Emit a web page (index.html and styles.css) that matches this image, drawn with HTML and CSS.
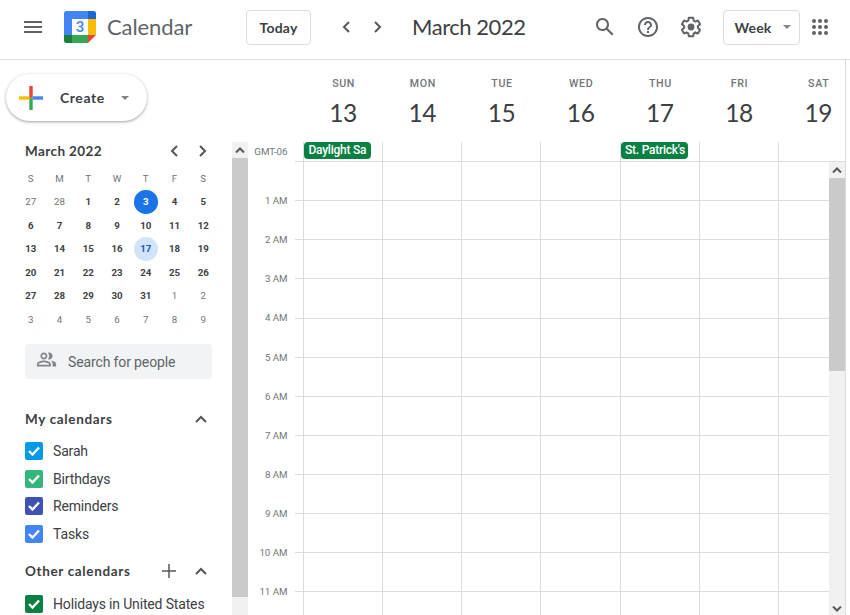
FILE: index.html
```
<!DOCTYPE html>
<html lang="en">

<head>
    <meta charset="UTF-8">
    <meta name="viewport" content="width=device-width, initial-scale=1.0">
    <title>Calendar</title>
    <link rel="stylesheet" href="styles.css">
</head>

<body>

    <!-- Top bar -->
    <header class="topbar">
        <svg class="menu-icon" width="18" height="12" viewBox="0 0 18 12"><path d="M0 0h18v2H0zM0 5h18v2H0zM0 10h18v2H0z"/></svg>
        <svg class="logo" width="32" height="32" viewBox="0 0 32 32">
            <path d="M2.500 0H24v8H8v16H0V2.500Q0 0 2.500 0z" fill="#4285f4"/>
            <path d="M24 0h5.500Q32 0 32 2.500V8h-8z" fill="#1967d2"/>
            <path d="M24 8h8v16h-8z" fill="#fbbc04"/>
            <path d="M8 24h16v8H8z" fill="#34a853"/>
            <path d="M0 24h8v8H2.500Q0 32 0 29.500z" fill="#188038"/>
            <path d="M24 24h8l-8 8z" fill="#ea4335"/>
            <path d="M8 8h16v16H8z" fill="#fff"/>
            <text x="16" y="20.800" text-anchor="middle" class="logo-day">3</text>
        </svg>
        <span class="brand">Calendar</span>
        <button class="btn today-btn">Today</button>
        <svg class="prev" width="8" height="12" viewBox="0 0 8 12"><path d="M7 1L2 6l5 5"/></svg>
        <svg class="next" width="8" height="12" viewBox="0 0 8 12"><path d="M1 1l5 5-5 5"/></svg>
        <h1 class="period">March 2022</h1>
        <div class="tools">
            <svg width="24" height="24" viewBox="0 0 24 24"><path d="M20.490 19l-5.730-5.730C15.530 12.200 16 10.910 16 9.500 16 5.910 13.090 3 9.500 3S3 5.910 3 9.500 5.910 16 9.500 16c1.410 0 2.700-.470 3.770-1.240L19 20.490 20.490 19zM5 9.500C5 7.010 7.010 5 9.500 5S14 7.010 14 9.500 11.990 14 9.500 14 5 11.990 5 9.500z"/></svg>
            <svg width="24" height="24" viewBox="0 0 24 24"><path d="M11 18h2v-2h-2v2zm1-16C6.480 2 2 6.480 2 12s4.480 10 10 10 10-4.480 10-10S17.520 2 12 2zm0 18c-4.410 0-8-3.590-8-8s3.590-8 8-8 8 3.590 8 8-3.590 8-8 8zm0-14c-2.210 0-4 1.790-4 4h2c0-1.100.9-2 2-2s2 .9 2 2c0 2-3 1.750-3 5h2c0-2.250 3-2.500 3-5 0-2.210-1.790-4-4-4z"/></svg>
            <svg width="24" height="24" viewBox="0 0 24 24"><path d="M13.850 22.250h-3.700c-.74 0-1.360-.54-1.450-1.270l-.27-1.890c-.27-.14-.53-.29-.79-.46l-1.800.72c-.7.26-1.470-.03-1.810-.65L2.200 15.530c-.35-.66-.2-1.440.36-1.880l1.530-1.190c-.01-.15-.02-.3-.02-.46 0-.15.01-.31.02-.46l-1.520-1.190c-.59-.45-.74-1.260-.37-1.880l1.850-3.190c.34-.62 1.110-.9 1.790-.63l1.810.73c.26-.17.52-.32.78-.46l.27-1.910c.09-.7.71-1.250 1.440-1.250h3.700c.74 0 1.360.54 1.450 1.270l.27 1.890c.27.14.53.29.79.46l1.800-.72c.71-.26 1.480.03 1.820.65l1.840 3.180c.36.66.2 1.440-.36 1.880l-1.520 1.190c.01.15.02.3.02.46s-.01.31-.02.46l1.520 1.190c.56.45.72 1.230.37 1.860l-1.860 3.220c-.34.62-1.110.9-1.800.63l-1.800-.72c-.26.17-.52.32-.78.46l-.27 1.910c-.1.68-.72 1.220-1.460 1.220zm-3.230-2h2.760l.37-2.550.53-.22c.44-.18.88-.44 1.340-.78l.45-.34 2.380.96 1.380-2.400-2.030-1.580.07-.56c.03-.26.06-.51.06-.78s-.03-.53-.06-.78l-.07-.56 2.030-1.580-1.390-2.400-2.390.96-.45-.35c-.42-.32-.87-.58-1.330-.77l-.52-.22-.37-2.550h-2.760l-.37 2.550-.53.21c-.44.19-.88.44-1.340.79l-.45.33-2.380-.95-1.390 2.390 2.030 1.580-.07.56a7 7 0 0 0-.06.79c0 .26.02.53.06.78l.07.56-2.030 1.580 1.380 2.400 2.390-.96.45.35c.43.33.86.58 1.330.77l.53.22.38 2.550z"/><circle cx="12" cy="12" r="3.400"/></svg>
        </div>
        <button class="btn view-btn">Week <span class="caret"></span></button>
        <svg class="apps" width="16" height="16" viewBox="0 0 16 16"><circle cx="2" cy="2" r="2"/><circle cx="8" cy="2" r="2"/><circle cx="14" cy="2" r="2"/><circle cx="2" cy="8" r="2"/><circle cx="8" cy="8" r="2"/><circle cx="14" cy="8" r="2"/><circle cx="2" cy="14" r="2"/><circle cx="8" cy="14" r="2"/><circle cx="14" cy="14" r="2"/></svg>
    </header>

    <div class="layout">
        <!-- Sidebar -->
        <aside class="sidebar">
            <button class="create">
                <svg width="24" height="24" viewBox="0 0 24 24"><path d="M10.300 0h3.400v10.300l-3.400 3.400z" fill="#ea4335"/><path d="M0 10.300h10.300v3.400H0z" fill="#fbbc04"/><path d="M10.300 13.700l3.400-3.400V24h-3.400z" fill="#34a853"/><path d="M13.700 10.300H24v3.400H13.700z" fill="#4285f4"/></svg>
                <span>Create</span>
                <span class="caret"></span>
            </button>

            <div class="side-body">
                <div class="side-content">
                    <div class="mini-head">
                        <span>March 2022</span>
                        <svg width="8" height="12" viewBox="0 0 8 12"><path d="M7 1L2 6l5 5"/></svg>
                        <svg width="8" height="12" viewBox="0 0 8 12"><path d="M1 1l5 5-5 5"/></svg>
                    </div>
                    <div class="mini-cal" id="miniCal"></div>

                    <div class="people">
                        <svg width="21" height="21" viewBox="0 0 24 24"><path d="M16.670 13.130C18.040 14.060 19 15.320 19 17v3h4v-3c0-2.180-3.570-3.470-6.330-3.870zM15 12c2.210 0 4-1.790 4-4s-1.790-4-4-4c-.47 0-.91.1-1.330.24C14.500 5.270 15 6.580 15 8s-.5 2.730-1.330 3.760c.42.14.86.24 1.330.24zM9 12c2.210 0 4-1.790 4-4s-1.790-4-4-4-4 1.790-4 4 1.790 4 4 4zm0-6c1.100 0 2 .9 2 2s-.9 2-2 2-2-.9-2-2 .9-2 2-2zM9 13c-2.670 0-8 1.340-8 4v3h16v-3c0-2.660-5.330-4-8-4zm6 5H3v-.99C3.200 16.290 6.300 15 9 15s5.800 1.290 6 2v1z"/></svg>
                        <span>Search for people</span>
                    </div>

                    <div class="list-head">
                        <span>My calendars</span>
                        <svg width="12" height="8" viewBox="0 0 12 8"><path d="M1 7l5-5 5 5"/></svg>
                    </div>
                    <ul class="cal-list">
                        <li><i class="check sky"><svg width="12" height="10" viewBox="0 0 12 10"><path d="M1 5l3.500 3.500L11 1.500"/></svg></i>Sarah</li>
                        <li><i class="check mint"><svg width="12" height="10" viewBox="0 0 12 10"><path d="M1 5l3.500 3.500L11 1.500"/></svg></i>Birthdays</li>
                        <li><i class="check indigo"><svg width="12" height="10" viewBox="0 0 12 10"><path d="M1 5l3.500 3.500L11 1.500"/></svg></i>Reminders</li>
                        <li><i class="check blue"><svg width="12" height="10" viewBox="0 0 12 10"><path d="M1 5l3.500 3.500L11 1.500"/></svg></i>Tasks</li>
                    </ul>

                    <div class="list-head other">
                        <span>Other calendars</span>
                        <svg class="plus" width="14" height="14" viewBox="0 0 14 14"><path d="M7 0v14M0 7h14"/></svg>
                        <svg width="12" height="8" viewBox="0 0 12 8"><path d="M1 7l5-5 5 5"/></svg>
                    </div>
                    <ul class="cal-list">
                        <li><i class="check green"><svg width="12" height="10" viewBox="0 0 12 10"><path d="M1 5l3.500 3.500L11 1.500"/></svg></i>Holidays in United States</li>
                    </ul>
                </div>
                <div class="scrollbar side-scroll">
                    <div class="arrow"><svg width="10" height="6" viewBox="0 0 10 6"><path d="M1 5.500l4-4 4 4"/></svg></div>
                    <div class="thumb"></div>
                </div>
            </div>
        </aside>

        <!-- Week view -->
        <main class="week">
            <div class="day-heads" id="dayHeads"></div>
            <div class="all-day" id="allDay"></div>
            <div class="week-body">
                <div class="hours" id="hours"></div>
                <div class="scrollbar main-scroll">
                    <div class="arrow"><svg width="10" height="6" viewBox="0 0 10 6"><path d="M1 5.500l4-4 4 4"/></svg></div>
                    <div class="thumb"></div>
                    <div class="arrow down"><svg width="10" height="6" viewBox="0 0 10 6"><path d="M1 .5l4 4 4-4"/></svg></div>
                </div>
            </div>
        </main>
    </div>

    <script>
        const days = ['Sun', 'Mon', 'Tue', 'Wed', 'Thu', 'Fri', 'Sat'];
        const events = { 0: 'Daylight Sa', 4: "St. Patrick's" };

        // Mini calendar, starting on February 27
        let mini = days.map(d => `<span class="dow">${d[0]}</span>`).join('');
        for (let i = 0; i < 42; i++) {
            const date = new Date(2022, 1, 27 + i);
            const n = date.getDate();
            let cls = '';
            if (date.getMonth() !== 2) cls = 'out';
            else if (n === 3) cls = 'today';
            else if (n === 17) cls = 'picked';
            mini += `<span class="${cls}">${n}</span>`;
        }
        document.getElementById('miniCal').innerHTML = mini;

        // Day headings
        document.getElementById('dayHeads').innerHTML = days.map((d, i) =>
            `<div class="day-head"><span>${d.toUpperCase()}</span><b>${13 + i}</b></div>`).join('');

        // All day row
        document.getElementById('allDay').innerHTML = '<div class="label">GMT-06</div><div class="tick"></div>' +
            days.map((d, i) => `<div class="cell">${events[i] ? `<div class="event">${events[i]}</div>` : ''}</div>`).join('');

        // Hour rows, each label sits on the line below its row
        let rows = '';
        for (let h = 1; h <= 12; h++) {
            const label = h < 12 ? h + ' AM' : '';
            rows += `<div class="hour"><div class="label">${label}</div><div class="tick"></div>${'<div class="cell"></div>'.repeat(7)}</div>`;
        }
        document.getElementById('hours').innerHTML = rows;
    </script>
</body>

</html>
```
FILE: styles.css
```
/* Reset */
* {
    margin: 0;
    padding: 0;
    box-sizing: border-box;
}

body {
    width: 850px;
    height: 615px;
    overflow: hidden;
    background: #fff;
    color: #3c4043;
    font-family: Roboto, Arial, sans-serif;
    display: flex;
    flex-direction: column;
}

svg {
    display: block;
    flex: none;
    fill: #5f6368;
}

button {
    background: #fff;
    font-family: Lato, sans-serif;
    color: #3c4043;
}

.caret {
    border: 4.5px solid transparent;
    border-top-color: #80868b;
    border-bottom: 0;
}

/* Top bar */
.topbar {
    height: 60px;
    flex: none;
    border-bottom: 1px solid #dfe0e3;
    display: flex;
    align-items: center;
    padding: 0 22px 5px 24px;
}

.logo {
    margin-left: 22px;
}

.logo-day {
    font: 500 15px Roboto, sans-serif;
    fill: #4285f4;
}

.brand {
    width: 139px;
    margin-left: 11px;
    padding-bottom: 1px;
    font-family: Lato, sans-serif;
    font-size: 22px;
    letter-spacing: -.1px;
    color: #5f6368;
}

.btn {
    height: 35px;
    border: 1px solid #dadce0;
    border-radius: 4px;
    font-size: 14px;
    font-weight: 700;
    letter-spacing: .2px;
}

.today-btn {
    width: 65px;
}

.prev {
    margin-left: 31px;
}

.next {
    margin-left: 24px;
}

.prev,
.next,
.mini-head svg,
.list-head svg,
.scrollbar svg {
    fill: none;
    stroke: #54585d;
    stroke-width: 2;
}

.period {
    margin-left: 30px;
    padding-bottom: 1px;
    font-family: Lato, sans-serif;
    font-size: 22px;
    font-weight: 400;
    letter-spacing: -.45px;
}

.tools {
    display: flex;
    gap: 19px;
    margin-left: auto;
    margin-right: 20px;
}

.view-btn {
    width: 77px;
    display: flex;
    align-items: center;
    justify-content: center;
    gap: 11px;
    padding-left: 2px;
}

.apps {
    margin-left: 12px;
}

/* Page layout */
.layout {
    flex: 1;
    min-height: 0;
    display: flex;
}

.sidebar {
    width: 248px;
    display: flex;
    flex-direction: column;
}

.create {
    width: 141px;
    height: 47px;
    margin: 14px 0 21px 6px;
    flex: none;
    padding-left: 13px;
    border: 0;
    border-radius: 24px;
    box-shadow: 0 1px 2px rgba(60, 64, 67, .3), 0 1px 3px 1px rgba(60, 64, 67, .15);
    display: flex;
    align-items: center;
    font-size: 14px;
    font-weight: 700;
    letter-spacing: .55px;
}

.create span:nth-child(2) {
    width: 61px;
    margin-left: 17px;
    text-align: left;
}

.side-body {
    flex: 1;
    min-height: 0;
    display: flex;
}

.side-content {
    width: 232px;
}

/* Mini calendar */
.mini-head {
    height: 18px;
    padding: 0 25px;
    display: flex;
    align-items: center;
    font: 700 13.5px Lato, sans-serif;
    letter-spacing: .4px;
}

.mini-head span {
    width: 145px;
}

.mini-head svg + svg {
    margin-left: 21px;
}

.mini-cal {
    display: grid;
    grid-template-columns: repeat(7, 23.500px);
    grid-auto-rows: 23.500px;
    column-gap: 5.250px;
    margin: 6.500px 0 0 19px;
    font-size: 9.700px;
    font-weight: 700;
    line-height: 23.500px;
    text-align: center;
}

.mini-cal .dow,
.mini-cal .out {
    font-weight: 400;
    color: #70757a;
}

.mini-cal .today {
    border-radius: 50%;
    background: #1a73e8;
    color: #fff;
}

.mini-cal .picked {
    border-radius: 50%;
    background: #d2e3fc;
    color: #185abc;
}

/* People search */
.people {
    width: 187px;
    height: 35px;
    margin: 13px 0 0 25px;
    padding-left: 11px;
    border-radius: 4px;
    background: #f1f3f4;
    display: flex;
    align-items: center;
    gap: 11px;
    font-size: 14px;
    letter-spacing: -.13px;
    color: #5f6368;
}

.people svg {
    margin-top: -4px;
    fill: #80868b;
}

/* Calendar lists */
.list-head {
    width: 182px;
    height: 18px;
    margin: 30.500px 0 10px 25px;
    display: flex;
    align-items: center;
    font: 700 13.5px Lato, sans-serif;
    letter-spacing: .65px;
}

.list-head span {
    flex: 1;
}

.list-head .plus {
    margin-right: 19px;
    stroke-width: 1.500;
}

.list-head.other {
    margin-top: 14px;
    margin-bottom: 11px;
}

.cal-list {
    list-style: none;
    padding-left: 25px;
}

.cal-list li {
    height: 27.500px;
    display: flex;
    align-items: center;
    gap: 10px;
    font-size: 14px;
    letter-spacing: -.16px;
}

.check {
    width: 18px;
    height: 18px;
    border-radius: 2px;
    display: flex;
    align-items: center;
    justify-content: center;
}

.check svg {
    fill: none;
    stroke: #fff;
    stroke-width: 2.400;
}

.sky {
    background: #039be5;
}

.mint {
    background: #33b679;
}

.indigo {
    background: #3f51b5;
}

.blue {
    background: #4285f4;
}

.green {
    background: #0b8043;
}

/* Scrollbars */
.scrollbar {
    width: 16px;
    flex: none;
    background: #f1f1f1;
    display: flex;
    flex-direction: column;
}

.arrow {
    height: 16px;
    flex: none;
    display: flex;
    align-items: center;
    justify-content: center;
}

.thumb {
    background: #cacaca;
}

.side-scroll .thumb {
    height: 439px;
}

.main-scroll .thumb {
    height: 193px;
}

.down {
    margin-top: auto;
    height: 12px;
}

/* Week view */
.week {
    width: 598px;
    border-right: 1px solid #dadce0;
    display: flex;
    flex-direction: column;
    overflow: hidden;
}

.day-heads {
    height: 82px;
    flex: none;
    display: flex;
    padding-left: 56px;
}

.day-head {
    width: 79.200px;
    flex: none;
    padding-top: 17px;
    text-align: center;
}

.day-head span {
    display: block;
    font-size: 10.700px;
    font-weight: 500;
    line-height: 13px;
    letter-spacing: .6px;
    color: #70757a;
}

.day-head b {
    display: block;
    margin-top: 7px;
    padding-right: 1px;
    font: 400 24.500px/32px Lato, sans-serif;
    letter-spacing: -.4px;
}

.all-day,
.hour {
    display: flex;
    flex: none;
    width: 700px;
}

.all-day {
    height: 20px;
}

.label {
    width: 47px;
    flex: none;
    padding-right: 7.500px;
    text-align: right;
    font-size: 9.700px;
    line-height: 12px;
    color: #70757a;
    white-space: nowrap;
}

.all-day .label {
    padding-top: 4px;
}

.tick {
    width: 8px;
    flex: none;
    border-bottom: 1px solid #dadce0;
}

.cell {
    width: 79.150px;
    flex: none;
    border-left: 1px solid #dadce0;
    border-bottom: 1px solid #dadce0;
}

.event {
    width: 67px;
    height: 17px;
    padding-left: 4.500px;
    border-radius: 4px;
    background: #0b8043;
    color: #fff;
    font-size: 12px;
    font-weight: 500;
    letter-spacing: -.25px;
    line-height: 17px;
    white-space: nowrap;
}

.week-body {
    flex: 1;
    min-height: 0;
    display: flex;
}

.hours {
    width: 581px;
    overflow: hidden;
}

.hour {
    height: 39.130px;
}

.hour .label {
    padding-top: 33px;
}
```
